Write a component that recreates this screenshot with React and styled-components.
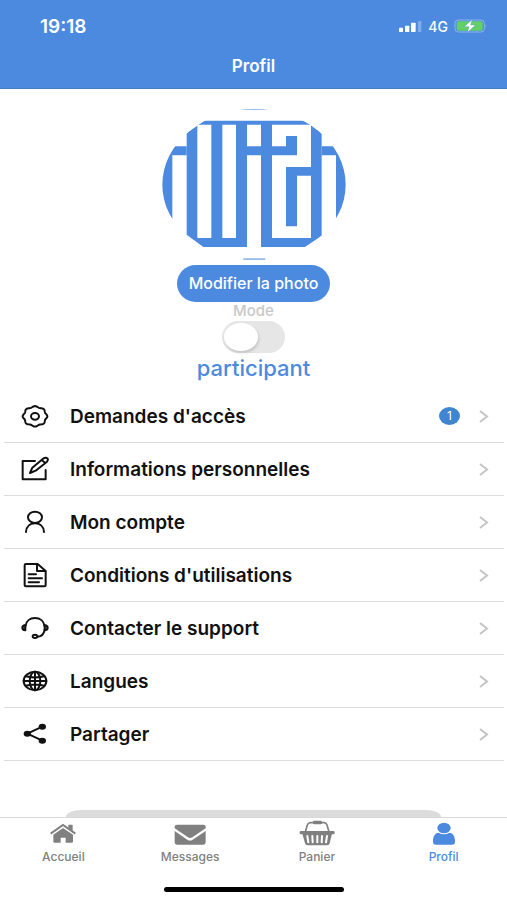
import React, {Fragment, useState} from 'react';
import styled, {createGlobalStyle} from "styled-components";

const BLUE = "#4c8ae0";
const GREY = "#808080";

const GlobalStyle = createGlobalStyle`
	* {
		box-sizing: border-box;
	}
	body {
		margin: 0;
		background: #fff;
		font-family: Inter, "Liberation Sans", sans-serif;
	}
`;

const Screen = styled.div`
	display: flex;
	flex-direction: column;
	height: 100vh;
`;

const Header = styled.header`
	color: #fff;
	background: ${BLUE};
	border-bottom: 1px solid #447dcb;
`;

const StatusBar = styled.div`
	display: flex;
	align-items: center;
	height: 52px;
	padding: 0 19px 0 40px;
`;

const Clock = styled.span`
	flex: 1;
	font-size: 19px;
	font-weight: 600;
`;

const Network = styled.span`
	margin: 0 6px;
	font-size: 14px;
	font-weight: 500;
`;

const Title = styled.h1`
	margin: 0;
	padding-bottom: 8px;
	font-size: 17px;
	font-weight: 600;
	line-height: 28px;
	text-align: center;
`;

const Content = styled.main`
	display: flex;
	flex-direction: column;
	flex: 1;
	min-height: 0;
	overflow-y: auto;
	scrollbar-width: none;
`;

const ProfileHead = styled.section`
	display: flex;
	flex-direction: column;
	align-items: center;
	padding: 20px 0 6px;
`;

const PhotoBtn = styled.button`
	height: 37px;
	margin-top: 5px;
	padding: 0 12px;
	border: 0;
	border-radius: 19px;
	color: #fff;
	background: ${BLUE};
	font: 500 16px/37px Inter, "Liberation Sans", sans-serif;
	cursor: pointer;
`;

const ModeLabel = styled.label`
	color: #c8c8c8;
	font-size: 15px;
	font-weight: 500;
	line-height: 18px;
`;

const ModeSwitch = styled.input`
	appearance: none;
	width: 63px;
	height: 32px;
	margin: 1px 0 0;
	padding: 2px;
	border-radius: 16px;
	background: #e6e6e6;
	cursor: pointer;
	&::before {
		content: "";
		display: block;
		width: 34px;
		height: 28px;
		margin-left: ${props => props.checked ? "25px" : "0"};
		border-radius: 50%;
		background: #fff;
		box-shadow: 1px 2px 3px rgba(0, 0, 0, 0.15);
	}
`;

const ModeName = styled.span`
	color: ${BLUE};
	font-size: 22px;
	font-weight: 500;
	line-height: 31px;
`;

const Menu = styled.nav`
	padding: 0 3px 0 4px;
`;

const MenuRow = styled.a`
	display: flex;
	align-items: center;
	height: 53px;
	padding: 0 15px 0 17px;
	border-bottom: 1px solid #dcdcdc;
	color: #111;
	text-decoration: none;
`;

const MenuText = styled.span`
	flex: 1;
	margin-left: 21px;
	font-size: 19px;
	font-weight: 600;
`;

const Badge = styled.span`
	width: 21px;
	height: 18px;
	margin-right: 19px;
	border-radius: 50%;
	color: #fff;
	background: #3f85d2;
	font-size: 12px;
	line-height: 18px;
	text-align: center;
`;

const SheetEdge = styled.div`
	flex: none;
	width: 74%;
	height: 7px;
	margin: auto auto 0;
	border-radius: 15px 15px 0 0 / 7px 7px 0 0;
	background: #dcdcdc;
`;

const TabBar = styled.footer`
	height: 83px;
	border-top: 1px solid #d8d8d8;
`;

const Tabs = styled.nav`
	display: grid;
	grid-template-columns: repeat(4, 1fr);
`;

const Tab = styled.a`
	display: flex;
	flex-direction: column;
	align-items: center;
	padding-top: 2px;
	color: ${props => props.$active ? BLUE : GREY};
	font-size: 12px;
	font-weight: 500;
	line-height: 18px;
	text-decoration: none;
`;

const HomeBar = styled.div`
	width: 180px;
	height: 5px;
	margin: 21px auto 0;
	border-radius: 3px;
	background: #000;
`;

const LineIcon = styled.svg`
	width: 28px;
	height: 26px;
	fill: none;
	stroke: #111;
	stroke-width: 6;
	stroke-linecap: round;
	stroke-linejoin: round;
`;

const TabIcon = styled.svg`
	width: 36px;
	height: 28px;
	fill: currentColor;
`;

// wavy outline with eight teeth
const gearPoints = Array.from({length: 96}, (_, i) => {
	const t = i * Math.PI / 48;
	const r = 1 + 0.06 * Math.cos(8 * t);
	return `${(42 + 35 * r * Math.cos(t)).toFixed(1)},${(40 + 29 * r * Math.sin(t)).toFixed(1)}`;
}).join(" ");

const menuIcons = {
	requests: (
		<Fragment>
			<polygon points={gearPoints}/>
			<ellipse cx="42" cy="40" rx="12" ry="10"/>
		</Fragment>
	),
	infos: (
		<Fragment>
			<path d="M42 15H5V70H74V42"/>
			<path d="M27 51L34 35L68 7Q75 3 80 8Q82 12 78 17L44 44ZM62 12L73 21"/>
		</Fragment>
	),
	account: (
		<Fragment>
			<ellipse cx="42" cy="25" rx="21" ry="17"/>
			<path d="M15 69C16 52 28 43 42 43S68 52 69 69"/>
		</Fragment>
	),
	terms: (
		<Fragment>
			<path d="M15 6H50L74 27V70Q74 73 70 73H15Q11 73 11 70V10Q11 6 15 6Z"/>
			<path d="M48 7V27H73M23 37H45M23 49H63M23 61H54"/>
		</Fragment>
	),
	support: (
		<Fragment>
			<path d="M13 34C15 18 27 9 42 9S69 18 71 34M71 44C69 56 61 65 50 65"/>
			<path d="M13 30V46Q4 45 4 38T13 30ZM71 30V46Q80 45 80 38T71 30Z" fill="#666"/>
			<ellipse cx="42" cy="64" rx="7" ry="5"/>
		</Fragment>
	),
	languages: (
		<Fragment>
			<ellipse cx="42" cy="39" rx="34" ry="28"/>
			<ellipse cx="42" cy="39" rx="16" ry="28"/>
			<path d="M42 11V67M8 39H76M15 25Q42 32 69 25M15 53Q42 46 69 53"/>
		</Fragment>
	),
	share: (
		<Fragment>
			<path d="M64 17L19 38L64 59"/>
			<g fill="#111" stroke="none">
				<ellipse cx="19" cy="38" rx="11" ry="9"/>
				<ellipse cx="64" cy="17" rx="11" ry="9"/>
				<ellipse cx="64" cy="59" rx="11" ry="9"/>
			</g>
		</Fragment>
	)
};

const tabIcons = {
	home: (
		<Fragment>
			<path d="M70 14H83V34L70 25Z"/>
			<path d="M17 41L54 15L91 41" fill="none" stroke="currentColor" strokeWidth="6"/>
			<path d="M25 44L54 24L84 44V65Q84 68 80 68H62V53H47V68H29Q25 68 25 65Z"/>
		</Fragment>
	),
	messages: (
		<Fragment>
			<path d="M8 25V20Q8 14 15 14H94Q101 14 101 20V25L61 52Q54 56 48 52Z"/>
			<path d="M8 33L46 59Q54 64 62 59L101 33V67Q101 74 94 74H15Q8 74 8 67Z"/>
		</Fragment>
	),
	basket: (
		<Fragment>
			<path d="M19 36L25 15Q27 9 34 8H76Q82 9 84 15L90 36" fill="none" stroke="currentColor" strokeWidth="5"/>
			<rect x="42" y="2" width="27" height="11" rx="4"/>
			<rect x="2" y="33" width="105" height="10" rx="4"/>
			<path d="M10 41H99L92 70Q91 76 84 76H26Q19 76 18 70Z"/>
			<path d="M25 48L28 67M40 48L41 67M55 48V67M69 48L68 67M84 48L81 67" stroke="#fff" strokeWidth="6" strokeLinecap="round"/>
		</Fragment>
	),
	profile: (
		<Fragment>
			<ellipse cx="54" cy="24" rx="20" ry="16"/>
			<path d="M21 62C21 47 29 38 38 38Q54 48 70 38C79 38 87 47 87 62V66Q87 74 78 74H30Q21 74 21 66Z"/>
		</Fragment>
	)
};

const menuItems = [
	{icon: "requests", text: "Demandes d'accès", count: 1},
	{icon: "infos", text: "Informations personnelles"},
	{icon: "account", text: "Mon compte"},
	{icon: "terms", text: "Conditions d'utilisations"},
	{icon: "support", text: "Contacter le support"},
	{icon: "languages", text: "Langues"},
	{icon: "share", text: "Partager"}
];

const tabItems = [
	{icon: "home", text: "Accueil"},
	{icon: "messages", text: "Messages"},
	{icon: "basket", text: "Panier"},
	{icon: "profile", text: "Profil", active: true}
];

const Signal = () => (
	<svg width="23" height="13" viewBox="0 0 69 39" fill="#fff">
		<rect x="0" y="23" width="12" height="13" rx="2"/>
		<rect x="18" y="17" width="13" height="19" rx="2"/>
		<rect x="36" y="8" width="14" height="28" rx="2"/>
		<rect x="57" y="3" width="10" height="33" rx="2" opacity="0.3"/>
	</svg>
);

const Battery = () => (
	<svg width="34" height="14" viewBox="0 0 102 42">
		<rect x="3" y="3" width="88" height="36" rx="10" fill="none" stroke="#8fb4ec" strokeWidth="3"/>
		<rect x="8" y="7" width="78" height="28" rx="6" fill="#63cf68"/>
		<path d="M95 16Q100 21 95 26Z" fill="#8fb4ec"/>
		<path d="M54 2L31 23H45L41 40L64 18H50Z" fill="#fff" stroke={BLUE} strokeWidth="1"/>
	</svg>
);

const Logo = () => (
	<svg width="184" height="151" viewBox="36 28 552 453" fill={BLUE}>
		<clipPath id="avatar">
			<ellipse cx="312" cy="255" rx="275" ry="227"/>
		</clipPath>
		<g clipPath="url(#avatar)">
			<path d="M272 27H352V31H272ZM280 476H346V483H280Z" opacity="0.6"/>
			<path d="M36 140H110V167H67V357H36ZM588 140H515V167H558V357H588Z"/>
			<path d="M163 63H465L515 100V408L465 442H160L110 405V100Z"/>
			<g fill="#fff">
				<path d="M142 75H184V415H142ZM217 75H258V415H217ZM291 75H333V140H291ZM291 167H333V443H291Z"/>
				<path d="M366 75H483V202H408V380H441V228H483V415H366V167H441V109H408V140H366Z"/>
			</g>
		</g>
	</svg>
);

const Chevron = () => (
	<svg width="10" height="13" viewBox="0 0 10 13" fill="none" stroke="#c4c4c4" strokeWidth="2">
		<path d="M1 1L8 6.500L1 12"/>
	</svg>
);

const App = () => {
	const [organizer, setOrganizer] = useState(false);

	return (
		<Screen>
			<GlobalStyle/>
			<Header>
				<StatusBar>
					<Clock>19:18</Clock>
					<Signal/>
					<Network>4G</Network>
					<Battery/>
				</StatusBar>
				<Title>Profil</Title>
			</Header>
			<Content>
				<ProfileHead>
					<Logo/>
					<PhotoBtn type="button">Modifier la photo</PhotoBtn>
					<ModeLabel htmlFor="mode">Mode</ModeLabel>
					<ModeSwitch
						id="mode"
						type="checkbox"
						checked={organizer}
						onChange={e => setOrganizer(e.target.checked)}
					/>
					<ModeName>participant</ModeName>
				</ProfileHead>
				<Menu>
					{menuItems.map(item => (
						<MenuRow key={item.icon} href={`#${item.icon}`}>
							<LineIcon viewBox="0 0 84 78">{menuIcons[item.icon]}</LineIcon>
							<MenuText>{item.text}</MenuText>
							{item.count && <Badge>{item.count}</Badge>}
							<Chevron/>
						</MenuRow>
					))}
				</Menu>
				<SheetEdge/>
			</Content>
			<TabBar>
				<Tabs>
					{tabItems.map(item => (
						<Tab key={item.icon} href={`#${item.icon}`} $active={item.active}>
							<TabIcon viewBox="0 0 108 84">{tabIcons[item.icon]}</TabIcon>
							{item.text}
						</Tab>
					))}
				</Tabs>
				<HomeBar/>
			</TabBar>
		</Screen>
	);
};

export default App;
